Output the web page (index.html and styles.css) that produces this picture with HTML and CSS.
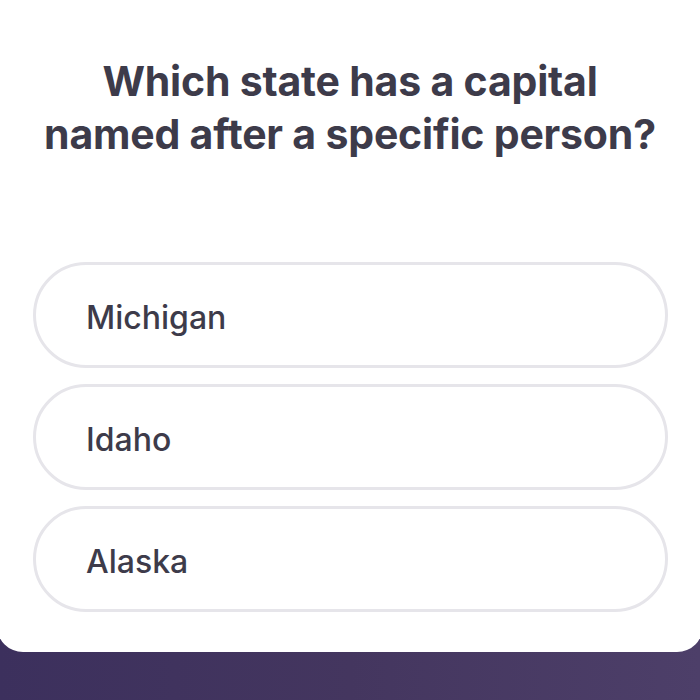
FILE: index.html
```html
<!DOCTYPE html>
<html>
<head>
<meta charset="utf-8">
<link rel="stylesheet" href="styles.css">
</head>
<body>
<div class="page">
  <div class="card">
    <h1 class="question">Which state has a capital<br>named after a specific person?</h1>
    <div class="options">
      <div class="option">Michigan</div>
      <div class="option">Idaho</div>
      <div class="option">Alaska</div>
    </div>
  </div>
</div>
</body>
</html>
```
FILE: styles.css
```css
html, body {
  margin: 0;
  padding: 0;
}
body {
  width: 700px;
  height: 700px;
  overflow: hidden;
  background: linear-gradient(90deg, #3c305d 0%, #44365f 50%, #4d3f69 100%);
  font-family: "Inter", "Noto Sans", sans-serif;
}
.page {
  height: 700px;
}
.card {
  background: #ffffff;
  margin: 0 -3px;
  height: 652px;
  box-sizing: border-box;
  border-radius: 0 0 26px 26px;
  padding-top: 55px;
  display: flex;
  flex-direction: column;
}
.question {
  margin: 0;
  text-align: center;
  font-size: 41px;
  line-height: 53px;
  font-weight: 700;
  color: #3d3b4a;
  letter-spacing: -0.2px;
}
.options {
  margin-top: 101px;
  margin-left: 36px;
  width: 635px;
  display: flex;
  flex-direction: column;
  gap: 16px;
}
.option {
  height: 106px;
  box-sizing: border-box;
  border: 3px solid #e6e5ea;
  border-radius: 53px;
  display: flex;
  align-items: center;
  padding-left: 50px;
  padding-top: 5px;
  font-size: 32px;
  font-weight: 500;
  color: #3d3b4a;
}
```
